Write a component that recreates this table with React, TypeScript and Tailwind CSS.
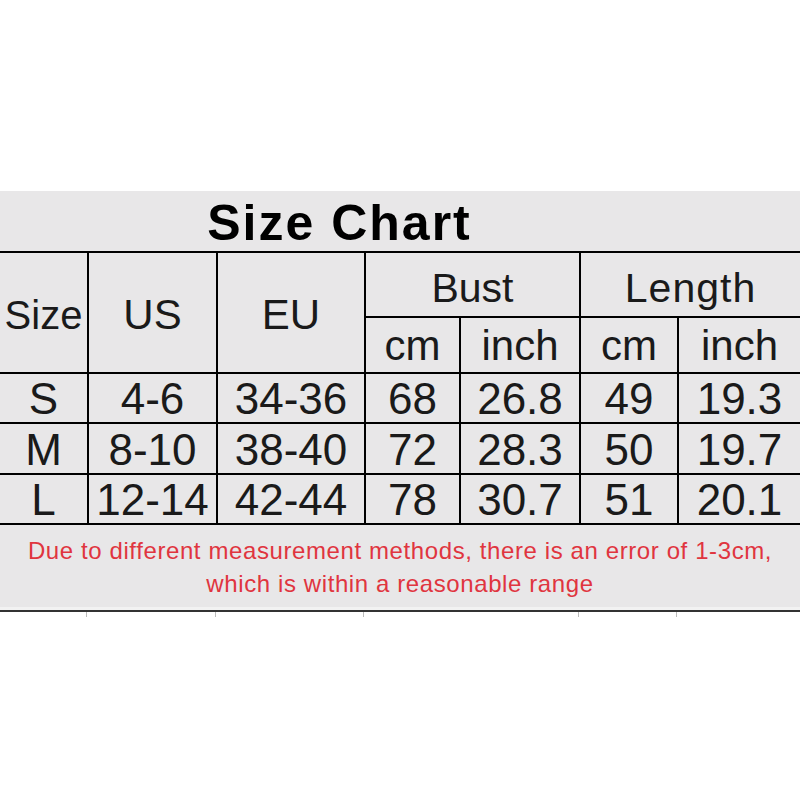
import React from 'react';

const cols = 'grid grid-cols-[87px_127px_146px_93px_118px_96px_121px] gap-x-[2px]';

const rows = [
  ['S', '4-6', '34-36', '68', '26.8', '49', '19.3'],
  ['M', '8-10', '38-40', '72', '28.3', '50', '19.7'],
  ['L', '12-14', '42-44', '78', '30.7', '51', '20.1'],
];

const cell = 'bg-[#e8e7e8] flex items-center justify-center';

const App = () => {
  return (
    <div className="w-[800px] h-[800px] bg-white flex flex-col font-['Liberation_Sans',Arial,sans-serif] text-[#1a1a1a]">
      <div className="h-[191px]"></div>

      {/* Bloco cinza com a tabela */}
      <div className="bg-[#e8e7e8] flex flex-col">
        <div className="h-[60px] w-[679px] flex items-center justify-center">
          <h1 className="text-[50px] font-bold tracking-[2px] leading-none pt-[4px] text-black">Size Chart</h1>
        </div>

        <div className={`${cols} grid-rows-[63px_54px_48px_49px_48px] gap-y-[2px] bg-black py-[2px]`}>
          <div className={`${cell} row-span-2 text-[40px] pt-[4px]`}>Size</div>
          <div className={`${cell} row-span-2 text-[42px] pt-[4px]`}>US</div>
          <div className={`${cell} row-span-2 text-[42px] pt-[4px]`}>EU</div>
          <div className={`${cell} col-span-2 text-[41px] pt-[8px]`}>Bust</div>
          <div className={`${cell} col-span-2 text-[41px] pt-[8px] tracking-[1px]`}>Length</div>
          <div className={`${cell} text-[42px]`}>cm</div>
          <div className={`${cell} text-[42px]`}>inch</div>
          <div className={`${cell} text-[42px]`}>cm</div>
          <div className={`${cell} text-[42px]`}>inch</div>
          {rows.map((r) =>
            r.map((v, i) => (
              <div key={r[0] + i} className={`${cell} text-[44px] leading-none pt-[2px]`}>
                {v}
              </div>
            ))
          )}
        </div>

        <div className="h-[82px] flex flex-col items-center justify-center text-[24px] tracking-[0.6px] leading-[33px] text-[#e0353f] pt-[2px]">
          <p>Due to different measurement methods, there is an error of 1-3cm,</p>
          <p>which is within a reasonable range</p>
        </div>
        <div className="h-[3px] bg-[#f2f2f2]"></div>
      </div>
      <div className="h-[2px] bg-[#333]"></div>

      {/* Marcas abaixo da tabela */}
      <div className={`${cols} h-[5px]`}>
        <div className="border-r border-[#bbb]"></div>
        <div className="border-r border-[#bbb]"></div>
        <div className="border-r border-[#bbb]"></div>
        <div></div>
        <div className="border-r border-[#bbb]"></div>
        <div className="border-r border-[#bbb]"></div>
        <div></div>
      </div>
    </div>
  );
};

export default App;
